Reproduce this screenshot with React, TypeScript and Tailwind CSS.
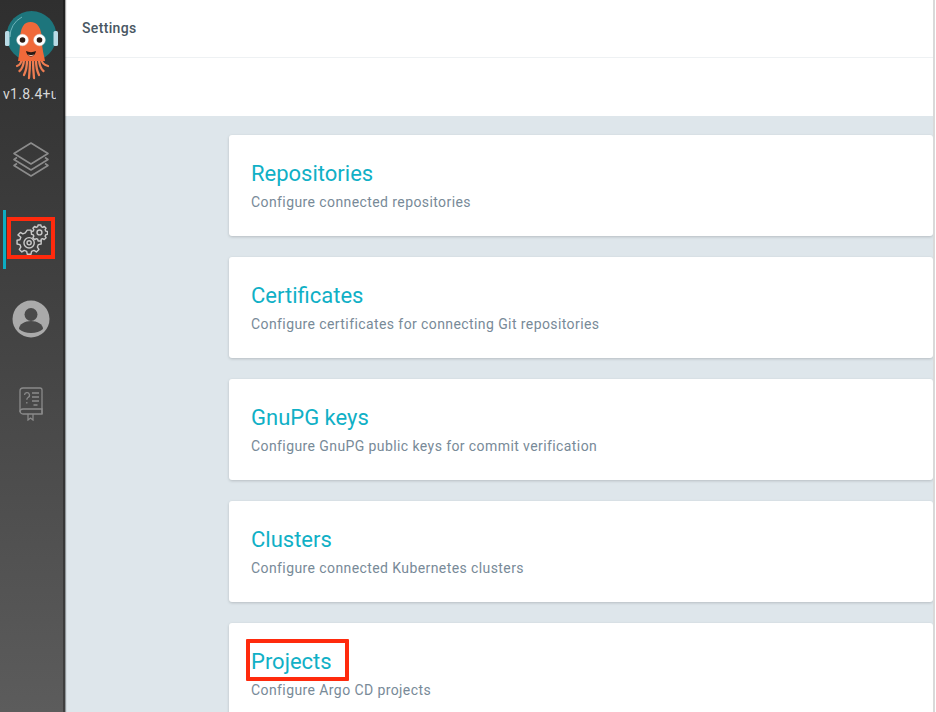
import type { ReactNode } from 'react';

const CARDS = [
  { title: 'Repositories', desc: 'Configure connected repositories' },
  { title: 'Certificates', desc: 'Configure certificates for connecting Git repositories' },
  { title: 'GnuPG keys', desc: 'Configure GnuPG public keys for commit verification' },
  { title: 'Clusters', desc: 'Configure connected Kubernetes clusters' },
  { title: 'Projects', desc: 'Configure Argo CD projects' },
];

function ArgoLogo() {
  return (
    <svg width="63" height="82" viewBox="0 0 63 82" className="block">
      <circle cx="31.500" cy="36" r="25" fill="#1d757c" />
      <path d="M10 37a22 22 0 0 1 12-20" stroke="#6fb4b9" strokeWidth="1" fill="none" />
      <rect x="5" y="31" width="4.500" height="15" rx="1.500" fill="#b9dbe6" />
      <rect x="53.500" y="31" width="4.500" height="15" rx="1.500" fill="#b9dbe6" />
      {/* Tentacles */}
      <path
        d="M22 58c-.5 5-2 7-5 8M24 60c-.5 6-2 9-4.500 11M27 60c0 7-1.500 12-3 15M30 60c0 8-.5 13-1 18M33 60c0 8 .5 13 1 18M36 60c0 7 1.500 12 3 15M39 60c.5 6 2 9 4.500 11M41 58c.5 5 3 7 7 8"
        stroke="#ee7d52"
        strokeWidth="2.300"
        fill="none"
        strokeLinecap="round"
      />
      <path d="M20 42c0-15 4-20 10.500-20S42 27 42 42c0 7 2 13 3 19H18c1-6 2-12 2-19z" fill="#f0693a" />
      <circle cx="22.500" cy="40" r="5.800" fill="#fff" stroke="#e4e4e4" strokeWidth="0.500" />
      <circle cx="39.500" cy="40" r="5.800" fill="#fff" stroke="#e4e4e4" strokeWidth="0.500" />
      <circle cx="22.500" cy="40" r="2.800" fill="#2a1a14" />
      <circle cx="39.500" cy="40" r="2.800" fill="#2a1a14" />
      <path d="M26 51c3 1.500 7 1.500 10 0-.8 4-3 5.500-5 5.500s-4.200-1.500-5-5.500z" fill="#2a1a14" />
      <path d="M28.500 55c1.500.8 3.500.8 5 0" stroke="#f6c6b4" strokeWidth="1" fill="none" />
    </svg>
  );
}

function NavItem({ children, active }: { children: ReactNode; active?: boolean }) {
  return (
    <div className="relative h-[79px] pr-[2px] flex items-center justify-center">
      {active && <div className="absolute left-[3px] top-[10px] w-[3px] h-[59px] bg-[#0dadc2]" />}
      {children}
    </div>
  );
}

function Sidebar() {
  return (
    <div className="relative z-10 w-[65px] shrink-0 h-full flex flex-col bg-gradient-to-b from-[#2f2f2f] to-[#5c5c5c] border-r-2 border-black/30 shadow-[1px_0_1px_rgba(0,0,0,0.35)]">
      <div className="h-[121px] flex flex-col">
        <ArgoLogo />
        <div className="mt-[3px] w-[56px] pl-[3px] text-[14px] leading-[18px] tracking-[0.3px] text-[#d8d8d8] whitespace-nowrap overflow-hidden">
          v1.8.4+u
        </div>
      </div>
      <NavItem>
        <svg width="38" height="36" viewBox="0 0 38 36" fill="none" stroke="#8c8c8c" strokeWidth="1.600" strokeLinejoin="round" className="mb-[3px]">
          <path d="M19 2 36 12.500 19 23 2 12.500z" />
          <path d="M5 16.500 2 18.500 19 29 36 18.500 33 16.500" />
          <path d="M5 22.500 2 24.500 19 35 36 24.500 33 22.500" />
        </svg>
      </NavItem>
      <NavItem active>
        <svg width="34" height="32" viewBox="0 0 36 34" fill="none" stroke="#c9c9c9" strokeWidth="1.500" strokeLinejoin="round">
          <path d="M14 6.500h4l.6 3 2.600 1 2.500-1.600 2.700 2.700-1.600 2.500 1 2.600 3 .6v4l-3 .6-1 2.600 1.600 2.500-2.700 2.700-2.500-1.600-2.600 1-.6 3h-4l-.6-3-2.600-1-2.500 1.600-2.700-2.700 1.600-2.500-1-2.600-3-.6v-4l3-.6 1-2.600L4.100 11.600l2.700-2.700 2.500 1.600 2.600-1z" />
          <circle cx="16" cy="20" r="5.500" />
          <circle cx="16" cy="20" r="2.200" />
          <path fill="#434343" d="M25.500 1h3l.4 1.800 1.500.7 1.600-1 2 2-1 1.600.7 1.500 1.800.4v3l-1.800.4-.7 1.500 1 1.600-2 2-1.600-1-1.500.7-.4 1.800h-3l-.4-1.800-1.500-.7-1.600 1-2-2 1-1.600-.7-1.500-1.800-.4v-3l1.800-.4.7-1.500-1-1.600 2-2 1.600 1 1.500-.7z" />
          <circle cx="27" cy="9" r="2.600" />
        </svg>
      </NavItem>
      <NavItem>
        <svg width="38" height="38" viewBox="0 0 38 38">
          <circle cx="19" cy="19" r="18.500" fill="#aaaaaa" />
          <circle cx="19" cy="14.500" r="6.500" fill="#4a4a4a" />
          <path d="M7 29c0-5 6-8 12-8s12 3 12 8c-3 2.500-7 4-12 4s-9-1.500-12-4z" fill="#4a4a4a" />
        </svg>
      </NavItem>
      <NavItem>
        <svg width="24" height="34" viewBox="0 0 24 34" fill="none" stroke="#8a8a8a" strokeWidth="1.300" className="mt-[13px]">
          <path d="M4 1h17a2 2 0 0 1 2 2v24H4a3 3 0 0 1-3-3V4a3 3 0 0 1 3-3z" />
          <path d="M1 25a3 3 0 0 1 3-3h19v5" />
          <path d="M9 27v6l2.500-2 2.500 2v-6" />
          <path d="M5.500 8a2.500 2.500 0 1 1 3.500 2.500c-1 .6-1.200 1.200-1.200 2.200M7.800 15v1.500" />
          <path d="M13 6h7M13 10h7M13 14h7M14.500 18h4" />
        </svg>
      </NavItem>
    </div>
  );
}

export default function App() {
  return (
    <div className="relative w-[936px] h-[712px] flex overflow-hidden bg-[#dee6eb] font-['Roboto',sans-serif]">
      <Sidebar />
      <div className="flex-1 min-w-0 flex flex-col">
        <div className="bg-white shrink-0">
          <div className="h-[58px] px-[17px] flex items-center border-b border-[#eef1f3]">
            <span className="text-[14px] font-medium tracking-[0.35px] text-[#495763]">Settings</span>
          </div>
          <div className="h-[58px]" />
        </div>
        <div className="pt-[19px] pl-[164px] flex flex-col gap-[21px]">
          {CARDS.map((c) => (
            <div
              key={c.title}
              className="h-[101px] shrink-0 bg-white rounded-[3px] shadow-[0_1px_3px_rgba(0,0,0,0.18)] px-[22px] pt-[24px]"
            >
              <div className="text-[22px] leading-[30px] text-[#10b0c6]">{c.title}</div>
              <div className="mt-[3px] text-[14px] leading-[20px] tracking-[0.41px] text-[#788a98]">{c.desc}</div>
            </div>
          ))}
        </div>
      </div>
      {/* Window edge */}
      <div className="w-[2px] shrink-0 bg-[#d9d9d9]" />
      <div className="w-px shrink-0 bg-white" />
      {/* Red annotation boxes */}
      <div className="absolute z-20 left-[7px] top-[217px] w-[48px] h-[42px] border-4 border-[#ff2a0d]" />
      <div className="absolute z-20 left-[246px] top-[639px] w-[103px] h-[42px] border-4 border-[#ff2a0d] rounded-[1px]" />
    </div>
  );
}
